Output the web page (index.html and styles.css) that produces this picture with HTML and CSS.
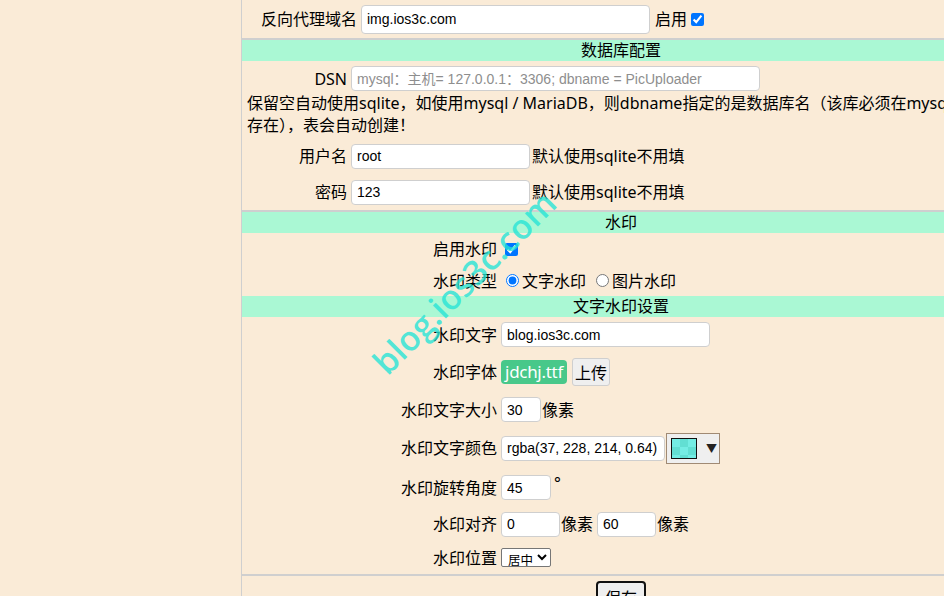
FILE: index.html
```html
<!DOCTYPE html>
<html lang="zh-CN">
<head>
<meta charset="utf-8">
<title>设置</title>
<link rel="stylesheet" href="styles.css">
</head>
<body>
<div class="page">
  <aside class="sidebar"></aside>
  <main class="panel">
    <div class="row row-top">
      <label class="lbl lbl-top">反向代理域名</label>
      <input class="inp inp-domain" type="text" value="img.ios3c.com">
      <span class="after-gap">启用</span><input class="chk" type="checkbox" checked>
    </div>

    <div class="sec-head sec-line">数据库配置</div>
    <div class="row row-dsn">
      <label class="lbl lbl-db">DSN</label>
      <input class="inp inp-dsn" type="text" placeholder="mysql：主机= 127.0.0.1：3306; dbname = PicUploader">
    </div>
    <p class="note">保留空自动使用sqlite，如使用mysql / MariaDB，则dbname指定的是数据库名（该库必须在mysql中已<br>存在），表会自动创建！</p>
    <div class="row row-36">
      <label class="lbl lbl-db">用户名</label>
      <input class="inp inp-user" type="text" value="root"><span>默认使用sqlite不用填</span>
    </div>
    <div class="row row-36">
      <label class="lbl lbl-db">密码</label>
      <input class="inp inp-user" type="text" value="123"><span>默认使用sqlite不用填</span>
    </div>

    <div class="sec-head sec-line">水印</div>
    <div class="row row-h32">
      <label class="lbl lbl-wm">启用水印</label>
      <input class="chk" type="checkbox" checked>
    </div>
    <div class="row row-h31">
      <label class="lbl lbl-wm">水印类型</label>
      <input class="rad" type="radio" name="wmtype" checked><span>文字水印</span>
      <input class="rad rad-2" type="radio" name="wmtype"><span>图片水印</span>
    </div>

    <div class="sec-head">文字水印设置</div>
    <div class="row row-h35">
      <label class="lbl lbl-wm">水印文字</label>
      <input class="inp inp-text" type="text" value="blog.ios3c.com">
    </div>
    <div class="row row-h39">
      <label class="lbl lbl-wm">水印字体</label>
      <span class="font-badge">jdchj.ttf</span>
      <button class="btn-upload" type="button">上传</button>
    </div>
    <div class="row row-h37">
      <label class="lbl lbl-wm">水印文字大小</label>
      <input class="inp inp-size" type="text" value="30"><span class="unit">像素</span>
    </div>
    <div class="row row-h40">
      <label class="lbl lbl-wm">水印文字颜色</label>
      <input class="inp inp-color" type="text" value="rgba(37, 228, 214, 0.64)">
      <div class="picker">
        <span class="swatch"></span>
        <span class="picker-arrow">▼</span>
      </div>
    </div>
    <div class="row row-h39">
      <label class="lbl lbl-wm">水印旋转角度</label>
      <input class="inp inp-angle" type="text" value="45"><span class="deg">°</span>
    </div>
    <div class="row row-h34">
      <label class="lbl lbl-wm">水印对齐</label>
      <input class="inp inp-align" type="text" value="0"><span class="unit">像素</span>
      <input class="inp inp-align inp-align-2" type="text" value="60"><span class="unit">像素</span>
    </div>
    <div class="row row-h33">
      <label class="lbl lbl-wm">水印位置</label>
      <select class="sel">
        <option>居中</option>
      </select>
    </div>

    <div class="save-row">
      <button class="btn-save" type="button">保存</button>
    </div>
  </main>
</div>
<div class="wm-overlay">blog.ios3c.com</div>
</body>
</html>
```

FILE: styles.css
```css
html, body {
  margin: 0;
  padding: 0;
  overflow: hidden;
}

body {
  background: #faebd7;
  color: #000;
  font-family: "Noto Sans", "Noto Sans CJK SC", sans-serif;
  font-size: 16px;
  line-height: 22px;
  position: relative;
  height: 596px;
}

.page {
  display: flex;
  width: 1000px;
  min-height: 700px;
}

.sidebar {
  width: 241px;
  flex-shrink: 0;
}

.panel {
  width: 758px;
  flex-shrink: 0;
  border-left: 1px solid #cfcfcf;
}

.row {
  display: flex;
  align-items: center;
  white-space: nowrap;
}

.lbl {
  flex-shrink: 0;
  text-align: right;
  margin-right: 4px;
}

.lbl-top { width: 115px; }
.lbl-db { width: 105px; }
.lbl-wm { width: 255px; }

.row-top { height: 38px; }
.row-dsn { padding-top: 5px; padding-bottom: 1px; }
.row-36 { height: 36px; }
.row-h31 { height: 31px; }
.row-h32 { height: 32px; }
.row-h33 { height: 33px; }
.row-h34 { height: 34px; }
.row-h35 { height: 35px; }
.row-h37 { height: 37px; }
.row-h39 { height: 39px; }
.row-h40 { height: 40px; }

.inp {
  box-sizing: border-box;
  height: 25px;
  margin: 0;
  padding: 0 5px;
  border: 1px solid #cfcfcf;
  border-radius: 4px;
  background: #fff;
  font-family: "Liberation Sans", "Noto Sans CJK SC", Arial, sans-serif;
  font-size: 14px;
  color: #000;
  outline: none;
}

.inp::placeholder {
  color: #8e8e8e;
}

.inp-domain { width: 289px; height: 29px; }
.inp-dsn { width: 409px; }
.inp-user { width: 179px; margin-right: 2px; }
.inp-text { width: 209px; }
.inp-size { width: 40px; margin-right: 1px; }
.inp-color { width: 164px; }
.inp-angle { width: 50px; }
.inp-align { width: 59px; margin-right: 1px; }
.inp-align-2 { margin-left: 4px; }

.after-gap { margin-left: 5px; }

.chk {
  width: 13px;
  height: 13px;
  margin: 0 0 0 4px;
}

.rad {
  width: 13px;
  height: 13px;
  margin: 0 3px 0 5px;
}

.rad-2 { margin-left: 10px; }

.sec-head {
  height: 21px;
  line-height: 21px;
  background: #aaf8d4;
  text-align: center;
}

.sec-line {
  border-top: 2px solid #cfcfcf;
}

.note {
  margin: 0 0 2px;
  padding-left: 5px;
  line-height: 22px;
  white-space: nowrap;
}

.font-badge {
  box-sizing: border-box;
  display: inline-block;
  width: 66px;
  height: 24px;
  line-height: 24px;
  padding: 0;
  text-align: center;
  border-radius: 4px;
  background: #48c88a;
  color: #fff;
  font-size: 17px;
  letter-spacing: -0.3px;
}

.btn-upload {
  box-sizing: border-box;
  width: 38px;
  height: 28px;
  margin: 0 0 0 5px;
  padding: 0;
  border: 1px solid #cfcfcf;
  border-radius: 3px;
  background: #efefef;
  font-family: "Noto Sans CJK SC", sans-serif;
  font-size: 16px;
  color: #000;
}

.unit { margin-left: 0; }

.picker {
  box-sizing: border-box;
  display: flex;
  align-items: center;
  width: 54px;
  height: 31px;
  margin-left: 1px;
  border: 1px solid #a08a74;
  background: #efefef;
}

.swatch {
  box-sizing: border-box;
  width: 26px;
  height: 21px;
  margin-left: 4px;
  border: 1px solid #111;
  background-color: #74ede4;
  background-image:
    linear-gradient(45deg, #62dfd3 25%, transparent 25%, transparent 75%, #62dfd3 75%),
    linear-gradient(45deg, #62dfd3 25%, transparent 25%, transparent 75%, #62dfd3 75%);
  background-size: 16px 16px;
  background-position: 0 0, 8px 8px;
}

.picker-arrow {
  margin-left: 9px;
  font-size: 11px;
  line-height: 11px;
  color: #222;
}

.deg {
  align-self: flex-start;
  margin-top: 4px;
  margin-left: 3px;
}

.sel {
  box-sizing: border-box;
  width: 50px;
  height: 19px;
  margin: 0;
  padding: 0 0 0 2px;
  border: 1px solid #767676;
  border-radius: 2px;
  background: #fff;
  font-family: "Noto Sans CJK SC", sans-serif;
  font-size: 12.5px;
  line-height: 17px;
  color: #000;
}

.save-row {
  border-top: 2px solid #cfcfcf;
  padding-top: 5px;
  display: flex;
  justify-content: center;
}

.btn-save {
  box-sizing: border-box;
  width: 50px;
  height: 32px;
  margin: 0;
  padding: 0;
  border: 2px solid #111;
  border-radius: 4px;
  background: #efefef;
  font-family: "Noto Sans CJK SC", sans-serif;
  font-size: 16px;
  color: #000;
}

.wm-overlay {
  position: absolute;
  left: 464px;
  top: 282px;
  transform: translate(-50%, -50%) rotate(-45deg);
  font-family: "Open Sans", "Noto Sans", sans-serif;
  font-size: 34px;
  font-weight: 600;
  line-height: 40px;
  color: rgba(37, 228, 214, 0.78);
  white-space: nowrap;
  pointer-events: none;
}
```
